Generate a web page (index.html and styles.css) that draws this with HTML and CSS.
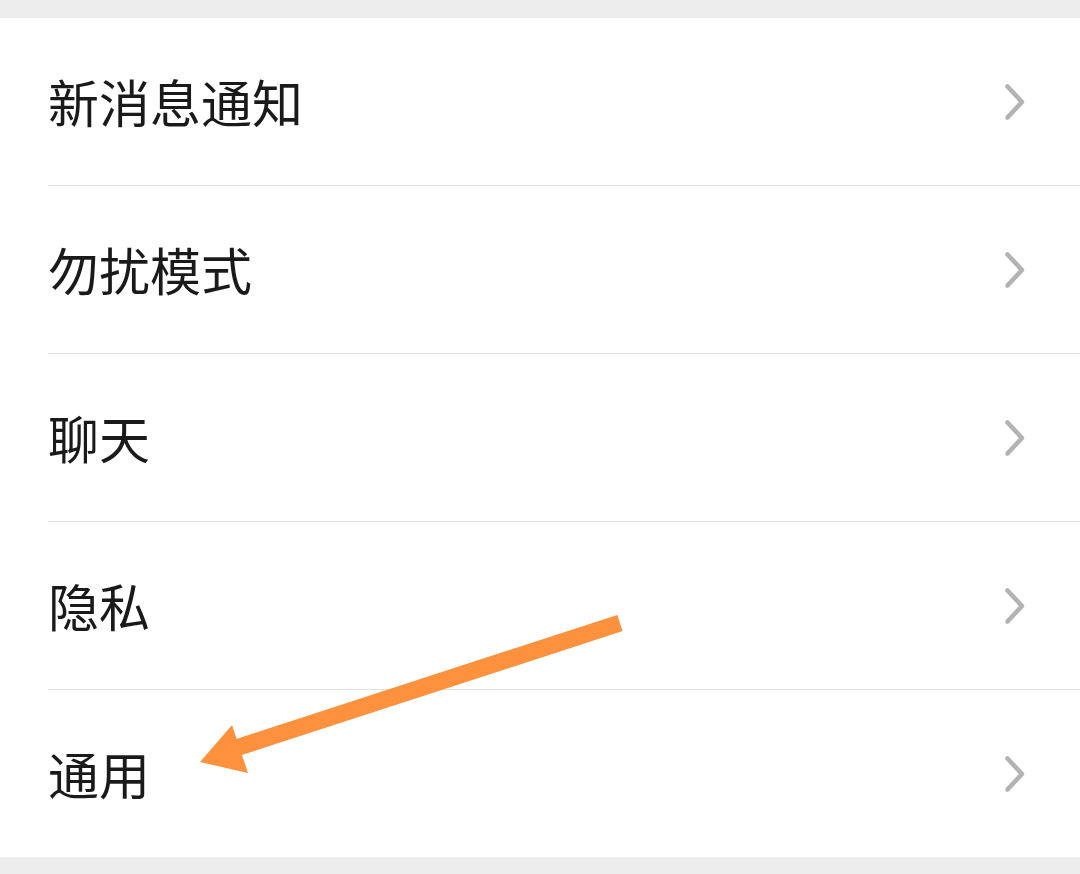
FILE: index.html
```html
<!DOCTYPE html>
<html lang="zh-CN">
<head>
<meta charset="utf-8">
<link rel="stylesheet" href="styles.css">
</head>
<body>
<div class="page">
  <ul class="list">
    <li class="row"><span class="label">新消息通知</span><svg class="chev" viewBox="0 0 20 36"><path d="M2.5 2.5 L17 18 L2.5 33.5"/></svg></li>
    <li class="row"><span class="label">勿扰模式</span><svg class="chev" viewBox="0 0 20 36"><path d="M2.5 2.5 L17 18 L2.5 33.5"/></svg></li>
    <li class="row"><span class="label">聊天</span><svg class="chev" viewBox="0 0 20 36"><path d="M2.5 2.5 L17 18 L2.5 33.5"/></svg></li>
    <li class="row"><span class="label">隐私</span><svg class="chev" viewBox="0 0 20 36"><path d="M2.5 2.5 L17 18 L2.5 33.5"/></svg></li>
    <li class="row"><span class="label">通用</span><svg class="chev" viewBox="0 0 20 36"><path d="M2.5 2.5 L17 18 L2.5 33.5"/></svg></li>
  </ul>
  <svg class="arrow" width="1080" height="874" viewBox="0 0 1080 874">
    <line x1="620" y1="623" x2="236" y2="748" stroke="#fe913d" stroke-width="17"/>
    <polygon points="200,762 232,725 248,773" fill="#fe913d"/>
  </svg>
</div>
</body>
</html>
```

FILE: styles.css
```css
html, body {
  margin: 0;
  padding: 0;
  background: #ededed;
}
.page {
  position: relative;
  width: 1080px;
  height: 874px;
  padding-top: 18px;
  box-sizing: border-box;
  background: #ededed;
}
.list {
  list-style: none;
  margin: 0;
  padding: 0 0 0 48px;
  background: #ffffff;
}
.row {
  display: flex;
  align-items: center;
  justify-content: space-between;
  height: 167px;
  padding-right: 55px;
  border-bottom: 1px solid #e2e2e2;
  font-family: "Noto Sans CJK SC", sans-serif;
  font-size: 51px;
  color: #1a1a1a;
}
.row:last-child {
  border-bottom: none;
}
.label {
  line-height: 1;
  margin-top: 0;
}
.chev {
  width: 20px;
  height: 36px;
  fill: none;
  stroke: #b3b3b3;
  stroke-width: 4.5;
  stroke-linecap: round;
  stroke-linejoin: round;
}
.arrow {
  position: absolute;
  left: 0;
  top: 0;
  pointer-events: none;
}
```
